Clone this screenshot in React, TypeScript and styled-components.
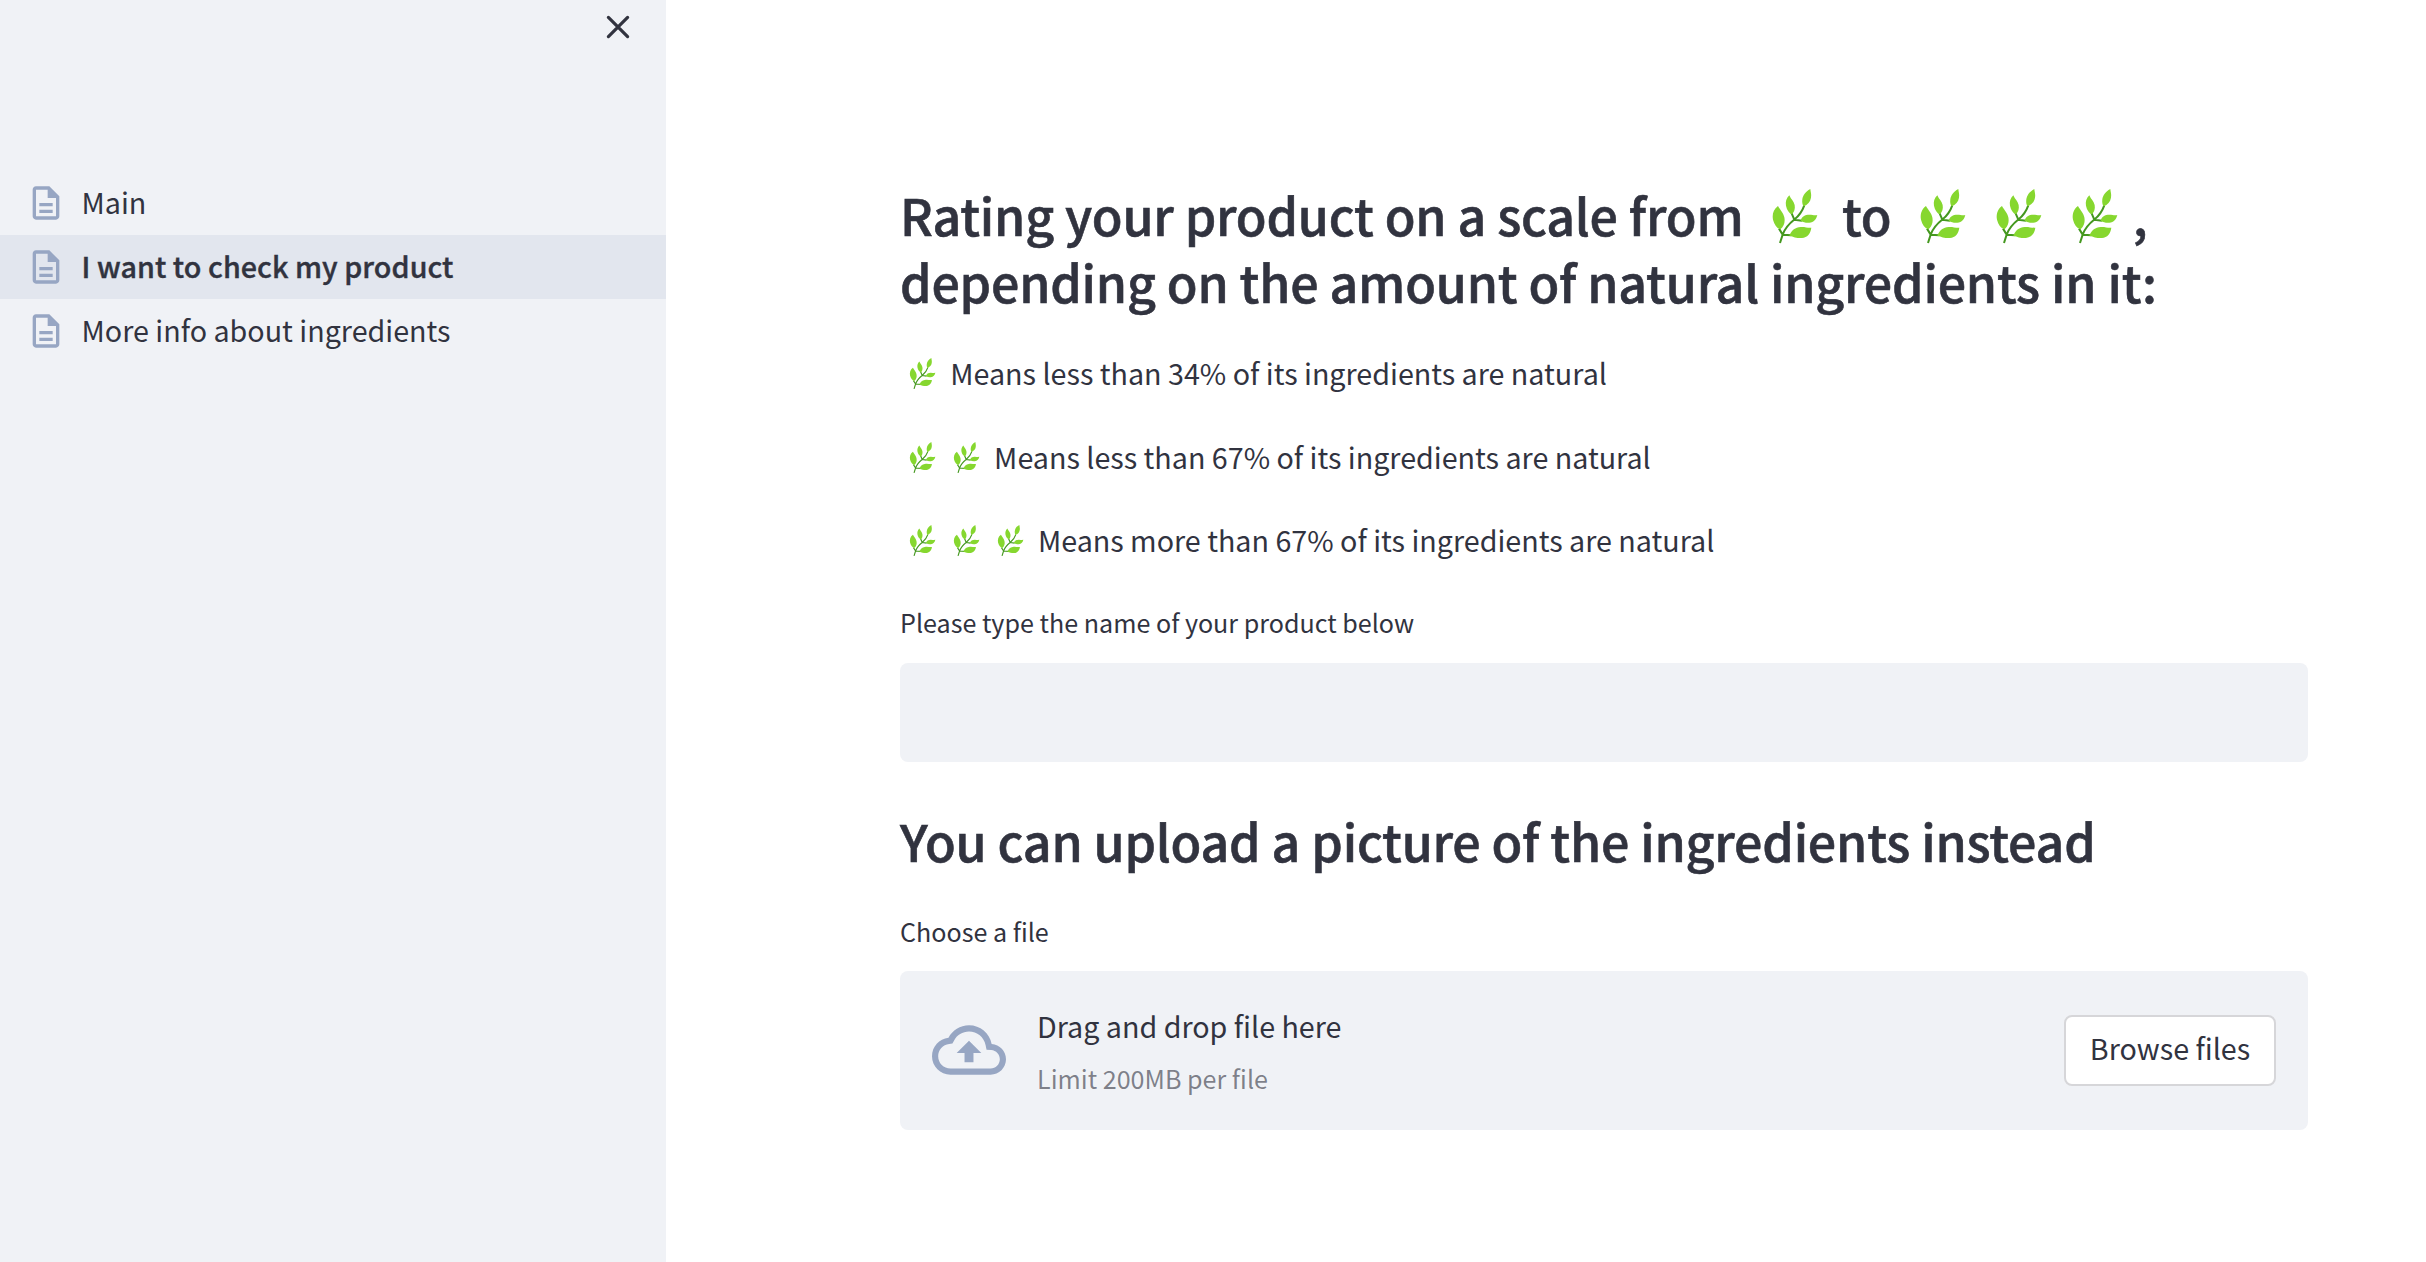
import React from 'react';
import styled, { createGlobalStyle } from 'styled-components';

const fontStack = '"Noto Sans CJK SC", "Noto Sans", sans-serif';

const GlobalStyle = createGlobalStyle`
  * { box-sizing: border-box; }
  body { margin: 0; background: #fff; color: #31333f; font-family: ${fontStack}; }
  h3, p { margin: 0; }
`;

const Page = styled.div`
  display: flex;
  height: 1262px;
  overflow: hidden;
`;

const Sidebar = styled.aside`
  width: 666px;
  flex: none;
  background: #f0f2f6;
`;

const SidebarTop = styled.div`
  height: 171px;
  display: flex;
  justify-content: flex-end;
  align-items: flex-start;
  padding: 15px 36px 0 0;
`;

const IconButton = styled.button`
  border: 0;
  padding: 0;
  background: none;
  line-height: 0;
  color: #31333f;
`;

const NavItem = styled.a<{ $active?: boolean }>`
  display: flex;
  align-items: center;
  gap: 15.5px;
  height: 64px;
  padding-left: 26px;
  font-size: 28.68px;
  font-weight: ${(p) => (p.$active ? 500 : 400)};
  letter-spacing: ${(p) => (p.$active ? 0.06 : 0)}px;
  -webkit-text-stroke: ${(p) => (p.$active ? 0.4 : 0)}px currentColor;
  background: ${(p) => (p.$active ? '#e2e6ee' : 'transparent')};
`;

const NavLabel = styled.span`
  line-height: 62px;
  padding-bottom: 2px;
`;

const GlyphSvg = styled.svg`
  flex: none;
  fill: #97a6c3;
`;

const Main = styled.main`
  width: 1408px;
  margin: 181px 0 0 234px;
`;

const Heading = styled.h3`
  font-size: 50.15px;
  line-height: 67px;
  font-weight: 500;
  letter-spacing: -0.2px;
  -webkit-text-stroke: 0.6px currentColor;
  white-space: nowrap;
`;

const Comma = styled.span`
  margin-left: 1px;
`;

const Rules = styled.div`
  display: flex;
  flex-direction: column;
  gap: 32px;
  margin: 32px 0 36px;
`;

const Rule = styled.p`
  font-size: 28.68px;
  line-height: 51.5px;
  height: 51.5px;
  white-space: nowrap;
`;

const LeafSvg = styled.svg<{ $large?: boolean }>`
  width: ${(p) => (p.$large ? 65.3 : 37.4)}px;
  height: ${(p) => (p.$large ? 54.3 : 31)}px;
  vertical-align: ${(p) => (p.$large ? -7.5 : -4.3)}px;
`;

const Label = styled.label`
  display: block;
  font-size: 25.1px;
  line-height: 40px;
`;

const TextInput = styled.input`
  display: block;
  width: 100%;
  height: 99px;
  margin: 21px 0 45px;
  border: 0;
  border-radius: 8px;
  background: #f0f2f6;
`;

const UploadLabel = styled(Label)`
  margin: 37px 0 20px;
`;

const Dropzone = styled.section`
  display: flex;
  align-items: center;
  height: 159px;
  padding: 0 32px;
  border-radius: 8px;
  background: #f0f2f6;
`;

const DropText = styled.div`
  flex: 1;
  margin-left: 31px;
  padding-top: 3px;
`;

const DropTitle = styled.div`
  font-size: 28.68px;
  line-height: 52px;
`;

const DropHint = styled.div`
  font-size: 25.1px;
  line-height: 52px;
  color: rgba(49, 51, 63, 0.6);
`;

const Browse = styled.button`
  width: 212px;
  height: 71px;
  padding: 0 0 6px;
  border: 2px solid #d6d6d9;
  border-radius: 8px;
  background: #fff;
  color: #31333f;
  font: 400 28.68px/61px ${fontStack};
`;

function Leaf({ large }: { large?: boolean }) {
  return (
    <LeafSvg $large={large} viewBox="14 27 196 163" role="img" aria-hidden="true">
      <path
        d="M56 189 L64 164 C72 141 85 130 100 118 C113 107 122 96 129 76 M64 164 L53 146 M64 164 L90 166 M99 119 L90 98 M99 119 L122 122"
        fill="none"
        stroke="#44981f"
        strokeWidth="6"
      />
      <g fill="#86d72f">
        <path d="M50 78 C36 88 32 104 35 119 C39 134 46 144 57 148 C68 140 72 126 69 112 C66 98 58 92 50 78Z" />
        <path d="M84 46 C75 54 72 65 74 77 C77 90 82 98 91 103 C99 97 102 86 100 75 C97 63 89 58 84 46Z" />
        <path d="M147 27 C132 35 125 46 123 58 C122 68 123 74 127 79 C139 74 147 66 149 53 C151 43 148 37 147 27Z" />
        <path d="M118 122 C121 110 131 104 144 104 C154 104 160 107 168 105 C165 118 158 127 144 128 C134 129 127 127 118 122Z" />
        <path d="M84 167 C91 150 102 142 118 141 C130 140 139 144 150 143 C148 160 138 173 122 174 C108 175 97 171 84 167Z" />
      </g>
    </LeafSvg>
  );
}

function PageIcon() {
  return (
    <GlyphSvg width="40" height="40" viewBox="0 0 24 24">
      <path d="M8 16h8v2H8zm0-4h8v2H8zm6-10H6c-1.1 0-2 .9-2 2v16c0 1.1.89 2 1.99 2H18c1.1 0 2-.9 2-2V8l-6-6zm4 18H6V4h7v5h5v11z" />
    </GlyphSvg>
  );
}

function CloudIcon() {
  return (
    <GlyphSvg width="74" height="74" viewBox="0 0 24 24">
      <path d="M19.35 10.04C18.67 6.59 15.64 4 12 4 9.11 4 6.6 5.64 5.35 8.04 2.34 8.36 0 10.91 0 14c0 3.31 2.69 6 6 6h13c2.76 0 5-2.24 5-5 0-2.64-2.05-4.78-4.65-4.96zM19 18H6c-2.21 0-4-1.79-4-4 0-2.05 1.53-3.76 3.56-3.97l1.07-.11.5-.95C8.08 7.14 9.94 6 12 6c2.62 0 4.88 1.86 5.39 4.43l.3 1.5 1.53.11c1.56.1 2.78 1.41 2.78 2.96 0 1.65-1.35 3-3 3zM8 13h2.55v3h2.9v-3H16l-4-4z" />
    </GlyphSvg>
  );
}

const pages = ['Main', 'I want to check my product', 'More info about ingredients'];

const ratings = [
  { leaves: 1, text: 'Means less than 34% of its ingredients are natural' },
  { leaves: 2, text: 'Means less than 67% of its ingredients are natural' },
  { leaves: 3, text: 'Means more than 67% of its ingredients are natural' },
];

export default function App() {
  return (
    <Page>
      <GlobalStyle />
      <Sidebar>
        <SidebarTop>
          <IconButton aria-label="Close">
            <svg width="24" height="24" viewBox="0 0 24 24" fill="none" stroke="currentColor" strokeWidth="3.2" strokeLinecap="round">
              <path d="M2.4 2.4 21.6 21.6M21.6 2.4 2.4 21.6" />
            </svg>
          </IconButton>
        </SidebarTop>
        {pages.map((name, i) => (
          <NavItem key={name} $active={i === 1}>
            <PageIcon />
            <NavLabel>{name}</NavLabel>
          </NavItem>
        ))}
      </Sidebar>
      <Main>
        <Heading>
          Rating your product on a scale from &nbsp;<Leaf large /> to &nbsp;<Leaf large /> <Leaf large /> <Leaf large />
          <Comma>,</Comma>
          <br />
          depending on the amount of natural ingredients in it:
        </Heading>
        <Rules>
          {ratings.map((r) => (
            <Rule key={r.leaves}>
              &nbsp;
              {Array.from({ length: r.leaves }, (_, i) => (
                <React.Fragment key={i}>
                  <Leaf />{' '}
                </React.Fragment>
              ))}
              {r.text}
            </Rule>
          ))}
        </Rules>
        <Label>Please type the name of your product below</Label>
        <TextInput />
        <Heading>You can upload a picture of the ingredients instead</Heading>
        <UploadLabel>Choose a file</UploadLabel>
        <Dropzone>
          <CloudIcon />
          <DropText>
            <DropTitle>Drag and drop file here</DropTitle>
            <DropHint>Limit 200MB per file</DropHint>
          </DropText>
          <Browse>Browse files</Browse>
        </Dropzone>
      </Main>
    </Page>
  );
}
